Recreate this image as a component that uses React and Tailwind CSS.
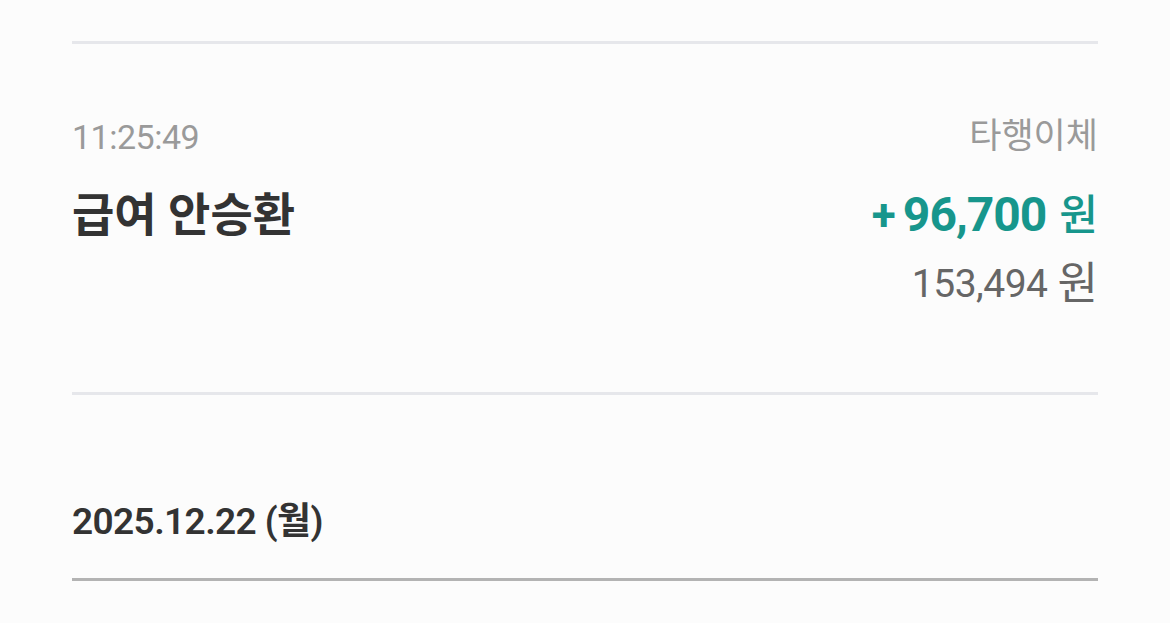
export default function App() {
  return (
    <div
      className="min-h-[623px] w-full bg-[#fcfcfc] px-[72px] pt-[41px]"
      style={{ fontFamily: "Roboto, 'Noto Sans CJK KR', sans-serif" }}
    >
      <div className="h-[3px] bg-[#e6e7eb]" />

      <div className="mt-[76px] flex items-center justify-between leading-[34px]">
        <span className="text-[34px] tracking-[-0.5px] text-[#9a9a9a]">11:25:49</span>
        <span className="text-[35px] text-[#9a9a9a]">타행이체</span>
      </div>

      <div className="mt-[36px] flex h-[50px] items-center justify-between">
        <span className="text-[46px] font-bold text-[#333333]">급여 안승환</span>
        <span className="flex items-center text-[#17968c]">
          <span className="text-[44px] font-bold">+</span>
          <span className="ml-[7px] text-[48px] font-bold tracking-[-1px]">96,700</span>
          <span className="ml-[13px] text-[42px] font-medium">원</span>
        </span>
      </div>

      <div className="mt-[24px] flex items-center justify-end leading-[40px] text-[#666666]">
        <span className="text-[39px] tracking-[-0.5px]">153,494</span>
        <span className="ml-[10px] text-[44px]">원</span>
      </div>

      <div className="mt-[88px] h-[3px] bg-[#e6e7eb]" />

      <div className="mt-[107px] leading-[40px]">
        <span className="text-[37px] font-semibold tracking-[-0.6px] text-[#333333]">2025.12.22 (월)</span>
      </div>

      <div className="mt-[29px] h-[3px] bg-[#b3b3b3]" />
    </div>
  );
}
